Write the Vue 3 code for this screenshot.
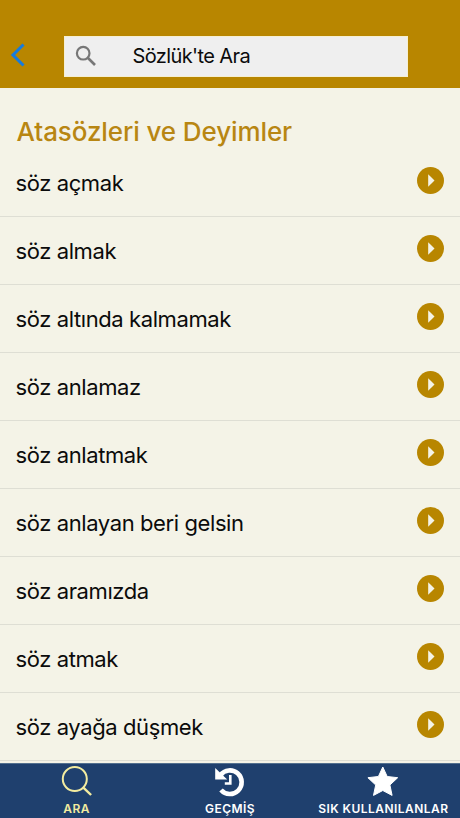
<template>
  <div class="screen">
    <header class="header">
      <button class="back" aria-label="Geri">
        <svg width="16" height="24" viewBox="0 0 16 24">
          <path d="M13.500 1.500 3 12l10.500 10.500" fill="none" stroke="#147be0" stroke-width="3" />
        </svg>
      </button>
      <div class="search">
        <svg class="search-icon" width="22" height="22" viewBox="0 0 22 22">
          <circle cx="8.200" cy="8.200" r="6.300" fill="none" stroke="#777" stroke-width="2.200" />
          <path d="m13 13 7 7" stroke="#777" stroke-width="2.700" />
        </svg>
        <span class="search-text">Sözlük'te Ara</span>
      </div>
    </header>

    <main class="content">
      <h1 class="title">Atasözleri ve Deyimler</h1>
      <ul class="list">
        <li v-for="item in items" :key="item" class="row">
          <span class="row-text">{{ item }}</span>
          <svg class="play" width="27" height="27" viewBox="0 0 27 27">
            <circle cx="13.500" cy="13.500" r="13.500" fill="#b88600" />
            <path d="M11.200 7.300v12.400l6.300-6.200z" fill="#f4f3e7" />
          </svg>
        </li>
      </ul>
    </main>

    <nav class="tabs">
      <a class="tab active">
        <svg class="tab-icon" width="32" height="32" viewBox="0 0 32 32">
          <circle cx="13.800" cy="14" r="12" fill="none" stroke="currentColor" stroke-width="2" />
          <path d="m22.100 22.300 8 7.700" stroke="currentColor" stroke-width="2.400" />
        </svg>
        <span>ARA</span>
      </a>
      <a class="tab">
        <svg class="tab-icon" width="32" height="32" viewBox="0 0 32 32">
          <path d="M6.500 10A11.800 11.800 0 1 1 7 25" fill="none" stroke="currentColor" stroke-width="4.600" />
          <path d="M1.200 3v11.500h12z" fill="currentColor" />
          <path d="M16.300 10v8.500h-5.500" fill="none" stroke="currentColor" stroke-width="2.600" />
        </svg>
        <span>GEÇMİŞ</span>
      </a>
      <a class="tab">
        <svg class="tab-icon" width="32" height="32" viewBox="0 0 32 32">
          <path d="m15.800 2 4.400 9.500 10.500 1.200-7.800 7.300 2.200 10.400-9.300-4.900-9.300 4.900L8.700 20 .9 12.700l10.500-1.200z" fill="currentColor" stroke="currentColor" stroke-width="1" stroke-linejoin="round" />
        </svg>
        <span>SIK KULLANILANLAR</span>
      </a>
    </nav>
  </div>
</template>

<script setup>
const items = [
  'söz açmak',
  'söz almak',
  'söz altında kalmamak',
  'söz anlamaz',
  'söz anlatmak',
  'söz anlayan beri gelsin',
  'söz aramızda',
  'söz atmak',
  'söz ayağa düşmek'
];
</script>

<style>
body {
  margin: 0;
}
</style>

<style scoped>
.screen {
  display: flex;
  flex-direction: column;
  width: 460px;
  height: 818px;
  overflow: hidden;
  background: #f4f3e7;
  font-family: Inter, "Liberation Sans", sans-serif;
  color: #0b0b0b;
}

.header {
  display: flex;
  flex: none;
  align-items: flex-start;
  box-sizing: border-box;
  height: 88px;
  padding: 36px 52px 0 10px;
  background: #b88600;
}

.back {
  display: flex;
  width: 54px;
  padding: 7px 0 0;
  border: none;
  background: none;
}

.search {
  display: flex;
  flex: 1;
  align-items: center;
  box-sizing: border-box;
  height: 41px;
  padding-left: 10px;
  border: 1px solid #f5efd2;
  background: #efefef;
}

.search-icon {
  margin-top: -1px;
}

.search-text {
  margin: -1px 0 0 35.5px;
  font-size: 20px;
  letter-spacing: -0.6px;
}

.content {
  flex: 1;
  min-height: 0;
  overflow: hidden;
}

.title {
  margin: 0;
  padding: 28px 16.5px 0;
  height: 32px;
  color: #b88612;
  font-size: 26px;
  font-weight: 500;
  line-height: 32px;
  letter-spacing: -0.1px;
}

.list {
  margin: 0;
  padding: 0;
  list-style: none;
}

.row {
  display: flex;
  align-items: flex-start;
  justify-content: space-between;
  box-sizing: border-box;
  height: 68px;
  padding: 18px 16.5px 0 15.5px;
  border-bottom: 1px solid #deded4;
}

/* the first row is slightly taller than the others */
.row:first-child {
  height: 69px;
  padding-top: 19px;
}

.row-text {
  font-size: 22px;
  line-height: 32px;
  letter-spacing: -0.4px;
}

.play {
  flex: none;
}

.tabs {
  display: flex;
  flex: none;
  height: 54px;
  border-top: 1px solid #53708f;
  background: #1f406e;
  color: #fff;
}

.tab {
  display: flex;
  flex: 1;
  flex-direction: column;
  align-items: center;
  padding-top: 1px;
  font-size: 12px;
  font-weight: 600;
  line-height: 16px;
  letter-spacing: 0.45px;
  white-space: nowrap;
}

.tab.active {
  color: #f3eca0;
}

.tab-icon {
  margin-bottom: 4px;
}
</style>
